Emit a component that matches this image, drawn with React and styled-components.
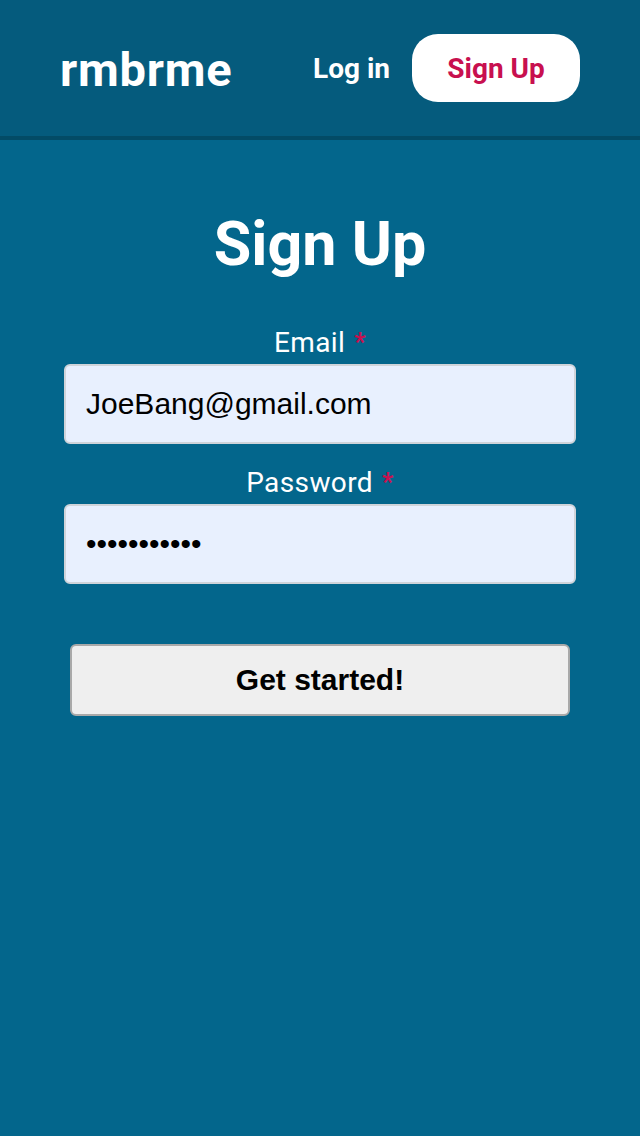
import React from 'react';
import styled, { createGlobalStyle } from 'styled-components';

const GlobalStyle = createGlobalStyle`
  html, body {
    margin: 0;
    padding: 0;
    background-color: #03668c;
    font-family: Roboto, "Liberation Sans", sans-serif;
  }
  * {
    box-sizing: border-box;
  }
`

const Page = styled.div`
  min-height: 1136px;
  background-color: #03668c;
`

const Header = styled.header`
  height: 140px;
  padding: 0 60px;
  display: flex;
  align-items: center;
  justify-content: space-between;
  background-color: #055b7d;
  border-bottom: 4px solid #034b66;
`

const Logo = styled.div`
  font-size: 47px;
  font-weight: 700;
  letter-spacing: 0.8px;
  color: white;
  margin-top: 2px;
`

const Nav = styled.nav`
  display: flex;
  align-items: center;
  gap: 22px;
`

const NavLink = styled.a`
  font-size: 28px;
  font-weight: 700;
  color: white;
  text-decoration: none;
`

const PillButton = styled.button`
  width: 168px;
  height: 68px;
  border: none;
  border-radius: 26px;
  background-color: white;
  color: #c8104f;
  font-family: Roboto, sans-serif;
  font-size: 28px;
  font-weight: 700;
`

const Main = styled.main`
  width: 512px;
  margin: 0 auto;
  padding-top: 68px;
  display: flex;
  flex-direction: column;
  align-items: center;
`

const Title = styled.h1`
  margin: 0 0 46px;
  font-size: 61px;
  font-weight: 700;
  line-height: 72px;
  color: white;
`

const Field = styled.div`
  width: 100%;
  display: flex;
  flex-direction: column;
  align-items: center;
  margin-bottom: 22px;
`

const Label = styled.label`
  font-size: 28px;
  line-height: 34px;
  letter-spacing: 0.4px;
  color: white;
  margin-bottom: 4px;
`

const Required = styled.span`
  color: #c8104f;
  font-weight: 700;
  font-size: 25px;
  margin-left: 9px;
  vertical-align: 1px;
`

const Input = styled.input`
  width: 100%;
  height: 80px;
  padding: 0 20px;
  border: 2px solid #cfd4da;
  border-radius: 6px;
  background-color: #e8f0fe;
  color: black;
  font-family: "Liberation Sans", Arial, sans-serif;
  font-size: 30px;
  outline: none;
`

const SubmitButton = styled.button`
  width: 500px;
  height: 72px;
  margin-top: 38px;
  border: 2px solid #a9a9a9;
  border-radius: 6px;
  background-color: #efefef;
  color: black;
  font-family: "Liberation Sans", Arial, sans-serif;
  font-size: 30px;
  font-weight: 700;
`

const App = () => {
  return (
    <Page>
      <GlobalStyle />
      <Header>
        <Logo>rmbrme</Logo>
        <Nav>
          <NavLink href="#">Log in</NavLink>
          <PillButton>Sign Up</PillButton>
        </Nav>
      </Header>
      <Main>
        <Title>Sign Up</Title>
        <Field>
          <Label>Email<Required>*</Required></Label>
          <Input type="email" defaultValue="JoeBang@gmail.com" />
        </Field>
        <Field>
          <Label>Password<Required>*</Required></Label>
          <Input type="password" defaultValue="secretpass1" />
        </Field>
        <SubmitButton>Get started!</SubmitButton>
      </Main>
    </Page>
  )
}

export default App;
